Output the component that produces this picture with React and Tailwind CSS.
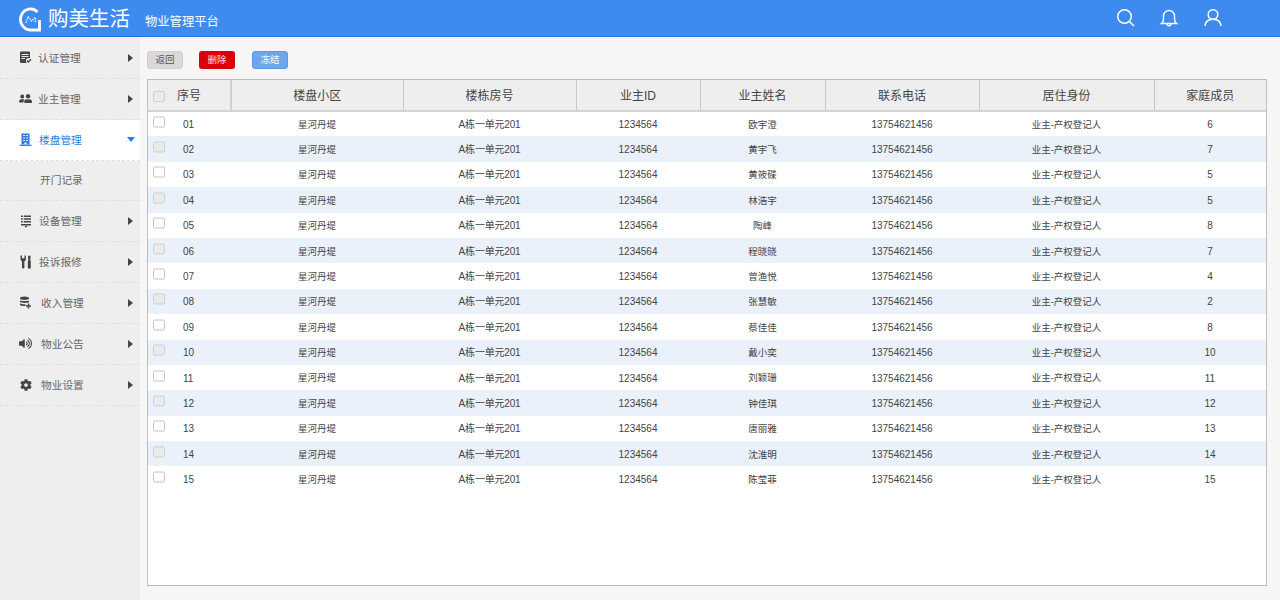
import React from "react";
import { FaUserFriends, FaVolumeUp, FaCog } from "react-icons/fa";

const font = "font-['Liberation_Sans','Noto_Sans_CJK_SC',sans-serif]";

const Doc = () => (
  <svg width="13" height="13" viewBox="0 0 13 13" className="text-[#444]">
    <path d="M1 1.500 Q1 .5 2 .5 H10 Q11 .5 11 1.500 V7 L7.500 12 H2 Q1 12 1 11Z" fill="currentColor" />
    <path d="M2.500 3.500H9.500M2.500 5.500H9.500M2.500 7.500H6" stroke="#eee" strokeWidth="1" />
    <circle cx="9.700" cy="9.700" r="2.800" fill="#eee" />
    <path d="M8 9.500 L9.400 11 L12 8.200" stroke="currentColor" strokeWidth="1.300" fill="none" />
  </svg>
);
const Building = () => (
  <svg width="13" height="13" viewBox="0 0 13 13" fill="none">
    <path d="M2.500 .5H10.500V11.500H2.500Z" fill="#2a7fe6" />
    <path d="M4.200 2.500H6M7.200 2.500H9M4.200 5H6M7.200 5H9M4.200 7.500H6M7.200 7.500H9" stroke="#fff" strokeWidth="1" />
    <path d="M5.500 9.500H7.500V11.500H5.500Z" fill="#fff" />
    <path d="M0.500 12.300H12.500" stroke="#2a7fe6" strokeWidth="1.300" />
  </svg>
);
const Equip = () => (
  <svg width="12" height="13" viewBox="0 0 12 13" className="text-[#444]" fill="currentColor">
    <path d="M1 .5h1.800v1.500H1zM3.800 .5h7.200v1.500H3.800zM1 3.300h1.800v1.500H1zM3.800 3.300h7.200v1.500H3.800zM1 6.100h1.800v1.500H1zM3.800 6.100h7.200v1.500H3.800zM1 8.900h10v1.500H1zM4.500 11h3l-1.500 1.800z" />
  </svg>
);
const Tools = () => (
  <svg width="12" height="14" viewBox="0 0 12 14" className="text-[#444]" fill="currentColor">
    <path d="M.5 .8V4c0 1.300.8 2 1.500 2.300V12.300a1.200 1.200 0 0 0 2.400 0V6.300C5.100 6 5.900 5.300 5.900 4V.8L4.500 .3V3.200H2V.3Z" />
    <path d="M8 .8H10.600L10.300 4.800V5.800H10.800V12.300a1.500 1.500 0 0 1-3 0V5.800H8.300V4.800Z" />
  </svg>
);
const Db = () => (
  <svg width="13" height="13" viewBox="0 0 13 13" className="text-[#444]" fill="currentColor">
    <ellipse cx="5.500" cy="2.200" rx="4.500" ry="1.700" />
    <path d="M1 4.200c1.500 1.200 7.500 1.200 9 0V6c-1.500 1.200-7.500 1.200-9 0zM1 7.200c1.200 1 3.500 1.200 5.500 1V10c-2 .2-4.300 0-5.500-1z" />
    <path d="M9.500 7.500V12.500M7 10H12" stroke="currentColor" strokeWidth="1.500" />
  </svg>
);

const menu = [
  { t: "认证管理", I: Doc, x: "gap-[6px]" },
  { t: "业主管理", I: () => <FaUserFriends size={13} className="text-[#444] -scale-x-100" />, x: "gap-[6px]" },
  { t: "楼盘管理", I: Building, active: true, x: "gap-[7px]" },
  { t: "开门记录", sub: true },
  { t: "设备管理", I: Equip, x: "gap-[7px]" },
  { t: "投诉报修", I: Tools, x: "gap-[7px]" },
  { t: "收入管理", I: Db, x: "gap-[9px]" },
  { t: "物业公告", I: () => <FaVolumeUp size={13} className="text-[#444]" />, x: "gap-[9px]" },
  { t: "物业设置", I: () => <FaCog size={12} className="text-[#444]" />, x: "gap-[9px]" },
];

const cols = [
  ["w-[83px]", ""],
  ["w-[172px]", "楼盘小区"],
  ["w-[173px]", "楼栋房号"],
  ["w-[124px]", "业主ID"],
  ["w-[125px]", "业主姓名"],
  ["w-[154px]", "联系电话"],
  ["w-[175px]", "居住身份"],
  ["", "家庭成员"],
];

const rows = [
  ["欧宇澄", 6], ["黄宇飞", 7], ["黄筱碟", 5], ["林浩宇", 5], ["陶峰", 8],
  ["程晓晓", 7], ["曾渔悦", 4], ["张慧敏", 2], ["蔡佳佳", 8], ["戴小奕", 10],
  ["刘颖珊", 11], ["钟佳琪", 12], ["唐丽雅", 13], ["沈淮明", 14], ["陈莹菲", 15],
];

const Check = ({ faded, lift }) => (
  <span className={`block w-[12px] h-[11px] rounded-[2px] border ${lift ? "-translate-y-[2.5px]" : ""} ${faded ? "border-[#d0d0d0] bg-[#eaeaea]" : "border-[#c4c4c4] bg-white"}`} />
);

export default function App() {
  return (
    <div className={`${font} w-[1280px] h-[600px] overflow-hidden bg-[#f7f5f6] flex flex-col`}>
      <header className="h-[37px] shrink-0 bg-[#3e8bef] border-b border-[#1c74e6] flex items-center text-white">
        <svg width="23" height="25" viewBox="0 0 23 25" className="ml-[19px] mt-[2px]" fill="none">
          <path d="M18.500 5A10 10.500 0 1 0 11.500 23H20.500V13" stroke="#fff" strokeWidth="2.800" />
          <path d="M7 16 L9 9.500 L12.500 14 L16.500 10.500 V16" stroke="#d5e5fb" strokeWidth="1.500" strokeDasharray="1.500 .8" />
        </svg>
        <span className="ml-[6px] mt-[2px] text-[20.500px] leading-none">购美生活</span>
        <span className="ml-[15px] mt-[9px] text-[12.300px] leading-none">物业管理平台</span>
        <div className="ml-auto flex items-center gap-[24px] mr-[57px]">
          <svg width="20" height="20" viewBox="0 0 20 20" fill="none" stroke="#fff" strokeWidth="1.500">
            <circle cx="9.500" cy="8.500" r="6.800" />
            <path d="M14.500 13.500L19 18" />
          </svg>
          <svg width="20" height="20" viewBox="0 0 20 20" fill="none" stroke="#fff" strokeWidth="1.400">
            <path d="M2.500 15.500c1.500-1 2-2 2-4.500V8a5.500 5.500 0 0 1 11 0v3c0 2.500.5 3.500 2 4.500z" />
            <path d="M8 15.500c0 3 4 3 4 0" />
          </svg>
          <svg width="20" height="20" viewBox="0 0 20 20" fill="none" stroke="#fff" strokeWidth="1.500">
            <circle cx="10" cy="6.500" r="4.800" />
            <path d="M2 18c.5-4.500 3.500-6.800 8-6.800s7.500 2.300 8 6.800" />
          </svg>
        </div>
      </header>
      <div className="flex flex-1 min-h-0">
        <aside className="w-[140px] shrink-0 bg-[#eeeeee] pt-px">
          {menu.map((m) => (
            <div
              key={m.t}
              className={`h-[40.850px] flex items-center border-b border-dashed border-[#dfdfdf] text-[10.700px] ${m.active ? "bg-white text-[#2a7fe6]" : "text-[#666]"} ${m.sub ? "pl-[40px]" : "pl-[19px]"}`}
            >
              {m.I && (
                <span className={`flex items-center ${m.x}`}>
                  <span className="w-[13px] flex justify-center"><m.I /></span>
                  <span>{m.t}</span>
                </span>
              )}
              {m.sub && <span>{m.t}</span>}
              {m.I && (
                m.active ? (
                  <span className="ml-auto mr-[5px] w-0 h-0 border-x-[4px] border-x-transparent border-t-[5px] border-t-[#2a7fe6]" />
                ) : (
                  <span className="ml-auto mr-[7px] w-0 h-0 border-y-[4px] border-y-transparent border-l-[5px] border-l-[#444]" />
                )
              )}
            </div>
          ))}
        </aside>
        <main className="flex-1 min-w-0 pl-[7px] pr-[13px] pt-[14px]">
          <div className="flex items-center h-[18px] text-[9.500px]">
            <button className="w-[36px] h-[18px] rounded-[3px] bg-[#d9d9d9] border border-[#d0d0d0] text-[#555]">返回</button>
            <button className="ml-[16px] w-[36px] h-[18px] rounded-[3px] bg-[#d9000c] text-[#f8dede]">删除</button>
            <button className="ml-[17px] w-[36px] h-[18px] rounded-[3px] bg-[#6ea6ec] border border-[#5a98ea] text-white">冻结</button>
          </div>
          <div className="mt-[10px] h-[507px] bg-white border border-[#bdbdbd]">
            <table className="w-full table-fixed border-collapse">
              <colgroup>
                {cols.map((c, i) => <col key={i} className={c[0]} />)}
              </colgroup>
              <thead>
                <tr className="h-[31px] bg-[#eeeeee] border-b-2 border-[#d4d4d4] text-[12px] font-normal text-[#444]">
                  <th className="font-normal border-r-2 border-[#d0d0d0] p-0 pt-[2px]">
                    <div className="flex items-center pl-[5px]">
                      <Check faded />
                      <span className="ml-[12px]">序号</span>
                    </div>
                  </th>
                  {cols.slice(1).map((c, i) => (
                    <th key={c[1]} className={`font-normal p-0 pt-[2px] ${i < 6 ? "border-r border-[#c8c8c8]" : ""}`}>{c[1]}</th>
                  ))}
                </tr>
              </thead>
              <tbody>
                {rows.map((r, i) => (
                  <tr key={i} className={`h-[25.400px] text-[9.500px] text-[#444] ${i % 2 ? "bg-[#eaf1fa]" : "bg-white"}`}>
                    <td className="p-0 pt-px">
                      <div className="flex items-center pl-[5px]">
                        <Check lift faded={i % 2 === 1} />
                        <span className="ml-[18px] text-[10px]">{String(i + 1).padStart(2, "0")}</span>
                      </div>
                    </td>
                    <td className="p-0 pt-[2px] text-center">星河丹堤</td>
                    <td className="p-0 pt-px text-center text-[10px] tracking-[-0.2px]">A栋一单元201</td>
                    <td className="p-0 pt-px text-center text-[10px]">1234564</td>
                    <td className="p-0 pt-[2px] text-center">{r[0]}</td>
                    <td className="p-0 pt-px text-center text-[10px]">13754621456</td>
                    <td className="p-0 pt-[2px] text-center">业主-产权登记人</td>
                    <td className="p-0 pt-px text-center text-[10px]">{r[1]}</td>
                  </tr>
                ))}
              </tbody>
            </table>
          </div>
        </main>
      </div>
    </div>
  );
}
